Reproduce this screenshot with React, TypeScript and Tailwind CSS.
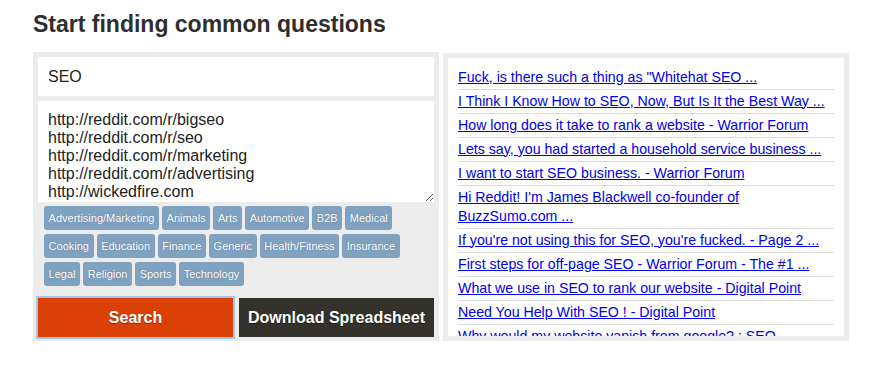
const tags = [
  'Advertising/Marketing',
  'Animals',
  'Arts',
  'Automotive',
  'B2B',
  'Medical',
  'Cooking',
  'Education',
  'Finance',
  'Generic',
  'Health/Fitness',
  'Insurance',
  'Legal',
  'Religion',
  'Sports',
  'Technology',
];

const results = [
  'Fuck, is there such a thing as "Whitehat SEO ...',
  'I Think I Know How to SEO, Now, But Is It the Best Way ...',
  'How long does it take to rank a website - Warrior Forum',
  'Lets say, you had started a household service business ...',
  'I want to start SEO business. - Warrior Forum',
  "Hi Reddit! I'm James Blackwell co-founder of BuzzSumo.com ...",
  "If you're not using this for SEO, you're fucked. - Page 2 ...",
  'First steps for off-page SEO - Warrior Forum - The #1 ...',
  'What we use in SEO to rank our website - Digital Point',
  'Need You Help With SEO ! - Digital Point',
  'Why would my website vanish from google? : SEO',
];

const sources = [
  'http://reddit.com/r/bigseo',
  'http://reddit.com/r/seo',
  'http://reddit.com/r/marketing',
  'http://reddit.com/r/advertising',
  'http://wickedfire.com',
].join('\n');

export default function App() {
  return (
    <div className="min-h-screen bg-white pl-[33px] pt-[10px] font-['Liberation_Sans',Arial,sans-serif]">
      {/* Title */}
      <h1 className="text-[23px] leading-[28px] font-bold text-[#2e2e2e]">
        Start finding common questions
      </h1>

      <div className="mt-[14px] flex items-start gap-[4px]">
        {/* Query form */}
        <div className="w-[406px] bg-[#ececec] px-[5px] pt-[5px] pb-[4px] flex flex-col">
          <input
            defaultValue="SEO"
            className="h-[39px] bg-white px-[10px] text-[16px] text-[#222] outline-none"
          />
          <textarea
            defaultValue={sources}
            className="mt-[5px] h-[101px] bg-white px-[10px] pt-[10px] pb-0 text-[16px] leading-[18px] text-[#222] outline-none overflow-hidden"
          />
          <div className="mt-[4px] pl-[6px] flex flex-wrap gap-x-[3px] gap-y-[4px]">
            {tags.map((t) => (
              <span
                key={t}
                className="h-[24px] px-[4.6px] rounded-[3px] bg-[#7fa2c1] text-white text-[11px] leading-[24px] [text-shadow:0_0_1px_rgba(40,60,80,0.5)]"
              >
                {t}
              </span>
            ))}
          </div>
          <div className="mt-[12px] grid grid-cols-2 gap-[6px]">
            <button className="h-[39px] bg-[#db4007] text-white text-[16px] font-bold ring-2 ring-[#a3c6e6] [text-shadow:0_1px_1px_rgba(0,0,0,0.35)]">
              Search
            </button>
            <button className="h-[39px] bg-[#33322d] text-white text-[16px] font-bold [text-shadow:0_1px_1px_rgba(0,0,0,0.5)]">
              Download Spreadsheet
            </button>
          </div>
        </div>

        {/* Results */}
        <div className="mt-[1px] w-[406px] bg-[#ececec] p-[5px]">
          <div className="h-[278px] bg-white overflow-hidden px-[10px] pt-[7.5px]">
            <ul>
              {results.map((r) => (
                <li key={r} className="py-[2px] border-b border-[#dcdcdc] text-[14.2px] leading-[19px]">
                  <a href="#" className="text-[#0000ee] underline">
                    {r}
                  </a>
                </li>
              ))}
            </ul>
          </div>
        </div>
      </div>
    </div>
  );
}
